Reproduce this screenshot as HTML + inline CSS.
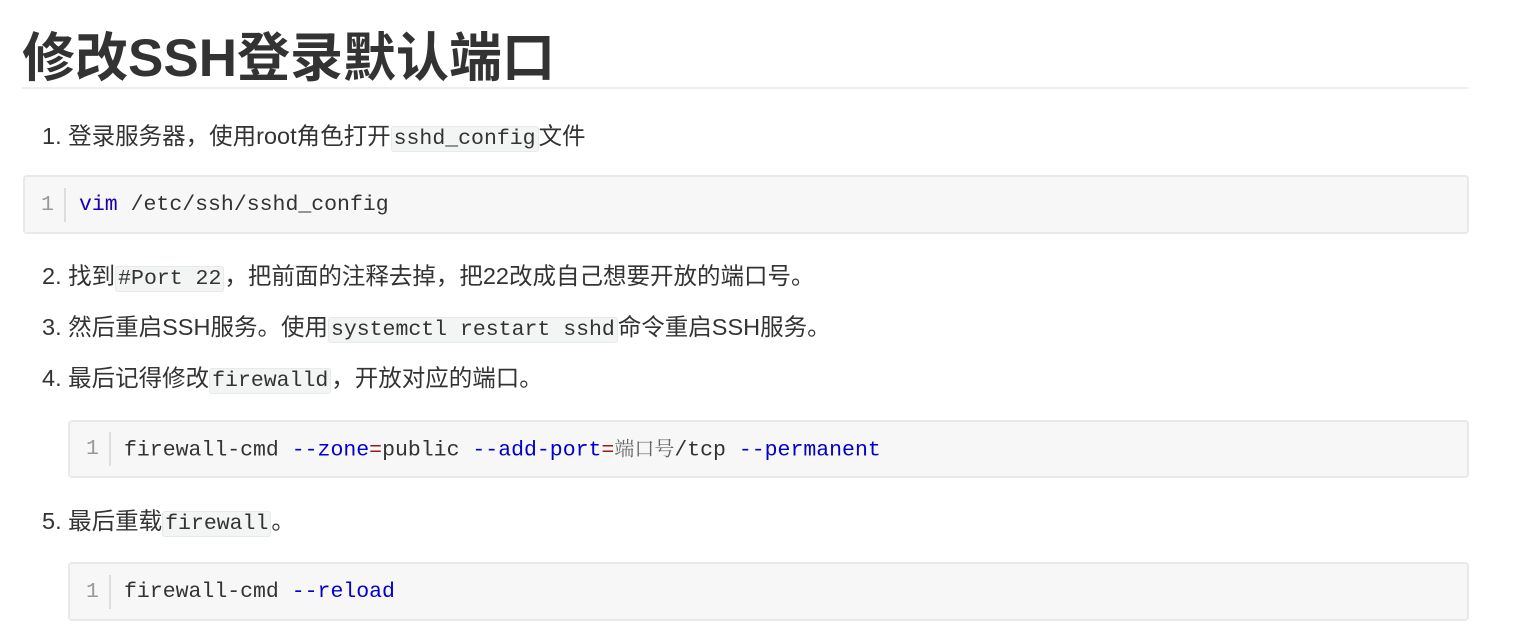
<!DOCTYPE html>
<html><head><meta charset="utf-8"><style>
body{margin:0;background:#fff;width:1523px;height:642px;overflow:hidden;font-family:"Liberation Sans","Noto Sans CJK SC",sans-serif;color:#333;}
h1{position:absolute;left:22px;top:28px;margin:0;font-size:53px;line-height:62px;font-weight:bold;color:#333;letter-spacing:0px}
.hr{position:absolute;left:22px;top:87px;width:1446px;height:2px;background:#eee}
.li{position:absolute;left:42px;font-size:23.5px;line-height:30px;white-space:nowrap;color:#333}
code{font-family:"Liberation Mono",monospace;font-size:21.5px;background:#f3f4f4;border:1px solid #e7eaed;border-radius:3px;padding:0 2px;}
.pre{position:absolute;background:#f7f7f7;border:2px solid #e7eaed;border-radius:4px;box-sizing:border-box;font-family:"Liberation Mono","Noto Sans CJK SC",monospace;font-size:21.5px;white-space:nowrap}
.ln{position:absolute;left:16px;top:50%;transform:translateY(-50%);color:#999;padding-right:10px;border-right:2px solid #ddd;line-height:34px}
.cd{position:absolute;left:54px;top:50%;transform:translateY(-50%);color:#333;line-height:34px}
.k{color:#1a00b3}.b{color:#0000cc}.o{color:#981a1a}.s{font-family:"Noto Serif CJK SC",serif;color:#666;font-size:20px}
</style></head><body>
<h1>修改SSH登录默认端口</h1>
<div class="hr"></div>
<div class="li" style="top:121px">1. 登录服务器，使用root角色打开<code>sshd_config</code>文件</div>
<div class="pre" style="left:23px;top:175px;width:1446px;height:59px"><span class="ln">1</span><span class="cd"><span class="k">vim</span> /etc/ssh/sshd_config</span></div>
<div class="li" style="top:261px">2. 找到<code>#Port 22</code>，把前面的注释去掉，把22改成自己想要开放的端口号。</div>
<div class="li" style="top:312px">3. 然后重启SSH服务。使用<code>systemctl restart sshd</code>命令重启SSH服务。</div>
<div class="li" style="top:363px">4. 最后记得修改<code>firewalld</code>，开放对应的端口。</div>
<div class="pre" style="left:68px;top:420px;width:1401px;height:58px"><span class="ln">1</span><span class="cd">firewall-cmd <span class="b">--zone</span><span class="o">=</span>public <span class="b">--add-port</span><span class="o">=</span><span class="s">端口号</span>/tcp <span class="b">--permanent</span></span></div>
<div class="li" style="top:506px">5. 最后重载<code>firewall</code>。</div>
<div class="pre" style="left:68px;top:562px;width:1401px;height:59px"><span class="ln">1</span><span class="cd">firewall-cmd <span class="b">--reload</span></span></div>
</body></html>
